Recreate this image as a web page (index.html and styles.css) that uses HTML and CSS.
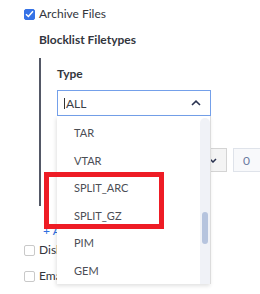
FILE: index.html
```html
<!DOCTYPE html>
<html>
<head>
<meta charset="utf-8">
<link rel="stylesheet" href="styles.css">
</head>
<body>
<div class="page">
  <div class="check-row">
    <span class="cb cb-on"><svg width="9" height="8" viewBox="0 0 9 8"><path d="M1 4.2 L3.4 6.5 L8 1.3" fill="none" stroke="#fff" stroke-width="1.5"/></svg></span>
    <span>Archive Files</span>
  </div>
  <div class="section-title">Blocklist Filetypes</div>
  <div class="block">
    <div class="field-label">Type</div>
    <div class="select-wrap">
      <div class="select">
        <span class="value"><span class="caret"></span>ALL</span>
        <svg class="chev" width="10" height="6" viewBox="0 0 10 6"><path d="M1 5 L5 1.2 L9 5" fill="none" stroke="#2b3350" stroke-width="1.6"/></svg>
      </div>
      <div class="dropdown">
        <ul class="options">
          <li>TAR</li>
          <li>VTAR</li>
          <li>SPLIT_ARC</li>
          <li>SPLIT_GZ</li>
          <li>PIM</li>
          <li>GEM</li>
        </ul>
        <div class="track"><div class="thumb"></div></div>
      </div>
    </div>
    <div class="cond-row">
      <div class="mini-select"><svg width="8" height="5" viewBox="0 0 8 5"><path d="M1 1 L4 4 L7 1" fill="none" stroke="#2b3350" stroke-width="1.5"/></svg></div>
      <div class="num-input">0</div>
    </div>
  </div>
  <div class="add-link">+ Add</div>
  <div class="check-row row-a"><span class="cb"></span><span>Disl</span></div>
  <div class="check-row row-b"><span class="cb"></span><span>Ema</span></div>
  <div class="highlight"></div>
</div>
</body>
</html>
```
FILE: styles.css
```css
html, body {
  margin: 0;
  padding: 0;
  overflow: hidden;
  background: #fff;
}
body {
  font-family: Lato, "Open Sans", sans-serif;
  font-size: 12px;
  color: #33363d;
}
.page {
  position: relative;
  width: 260px;
  height: 294px;
  box-sizing: border-box;
  padding: 6px 0 0 24px;
  overflow: hidden;
}
.check-row {
  display: flex;
  align-items: center;
  gap: 4px;
  height: 16px;
  line-height: 16px;
}
.cb {
  width: 11px;
  height: 11px;
  box-sizing: border-box;
  border: 1px solid #c9c9c9;
  border-radius: 2px;
  background: #fff;
  display: flex;
  align-items: center;
  justify-content: center;
  flex: none;
}
.cb-on {
  background: #3572e6;
  border-color: #3572e6;
}
.section-title {
  margin-top: 10px;
  margin-left: 15px;
  line-height: 16px;
  font-weight: 700;
}
.block {
  margin-top: 10px;
  margin-left: 15px;
  border-left: 2px solid #535866;
  padding: 8px 0 34px 16px;
}
.field-label {
  line-height: 16px;
  font-weight: 700;
}
.select-wrap {
  position: relative;
  margin-top: 8px;
  width: 154px;
}
.select {
  height: 26px;
  box-sizing: border-box;
  border: 1px solid #74a0ea;
  display: flex;
  align-items: center;
  justify-content: space-between;
  padding: 0 9px 0 6px;
}
.value {
  display: flex;
  align-items: center;
  color: #3b3e45;
}
.caret {
  width: 1px;
  height: 11px;
  background: #333;
  margin-right: 1px;
}
.dropdown {
  position: absolute;
  top: 100%;
  left: 0;
  width: 154px;
  height: 168px;
  box-sizing: border-box;
  background: #fff;
  border-right: 1px solid #dcdcdc;
  box-shadow: -1px 2px 4px rgba(0, 0, 0, 0.12);
  display: flex;
  overflow: hidden;
  z-index: 2;
}
.options {
  flex: 1;
  list-style: none;
  margin: 0;
  padding: 3px 0 0 17px;
  font-size: 11px;
  line-height: 27.5px;
  color: #4b4e55;
}
.track {
  width: 10px;
  margin-top: 2px;
  background: #f0f2f7;
  border-radius: 5px 5px 0 0;
  flex: none;
}
.thumb {
  margin: 94px 0 0 2px;
  width: 6px;
  height: 32px;
  border-radius: 3px;
  background: #b6c4de;
}
.cond-row {
  margin-top: 32px;
  display: flex;
  gap: 6px;
  height: 24px;
}
.mini-select {
  width: 170px;
  flex: none;
  box-sizing: border-box;
  border: 1px solid #d4d4d4;
  background: #f4f4f4;
  display: flex;
  align-items: center;
  justify-content: flex-end;
  padding-right: 9px;
}
.num-input {
  width: 40px;
  flex: none;
  box-sizing: border-box;
  border: 1px solid #dfe3ea;
  background: #f8f9fb;
  padding-left: 9px;
  color: #6b7ba0;
  display: flex;
  align-items: center;
}
.add-link {
  margin-top: 17px;
  margin-left: 19px;
  line-height: 16px;
  color: #2f6fe0;
}
.row-a {
  margin-top: 3px;
}
.row-b {
  margin-top: 10px;
}
.highlight {
  position: absolute;
  left: 44px;
  top: 172px;
  width: 120px;
  height: 57px;
  box-sizing: border-box;
  border: 5px solid #ee1c25;
  z-index: 3;
}
```
